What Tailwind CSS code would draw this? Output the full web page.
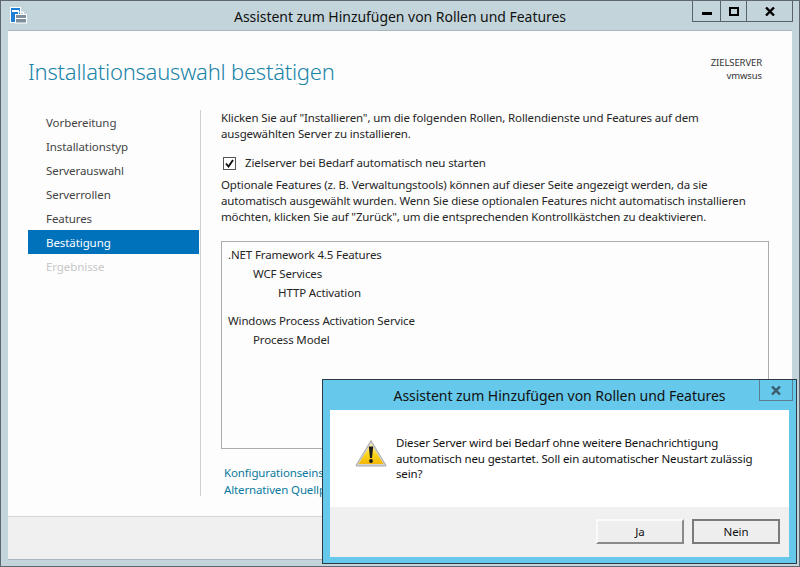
<!DOCTYPE html>
<html lang="de"><head><meta charset="utf-8"><script src="https://cdn.jsdelivr.net/npm/@tailwindcss/browser@4"></script></head>
<body class="m-0 overflow-hidden">
<div class="relative w-[800px] h-[567px] overflow-hidden bg-[#c3d5da] border border-[#5f6770] font-['Noto_Sans',sans-serif] text-[11.5px] tracking-[-0.135px] text-[#262626] flex flex-col">
  <!-- title bar -->
  <div class="relative h-[29px] shrink-0 flex items-center">
    <svg class="absolute left-[9px] top-[6px]" width="18" height="17" viewBox="0 0 18 17"><rect x="0.5" y="0.5" width="10" height="15" fill="#1e7fd6" stroke="#fff"/><rect x="2" y="3" width="7" height="2" fill="#fff"/><rect x="5.5" y="7.5" width="11" height="8.5" fill="#7f8f9c" stroke="#fff"/><path d="M8.5 7V5h5v2" fill="none" stroke="#fff"/><rect x="6" y="11" width="10" height="1" fill="#fff"/></svg>
    <div class="w-full text-center text-[14px] tracking-[-0.04px] leading-[29px] text-[#111] pt-[1px]">Assistent zum Hinzufügen von Rollen und Features</div>
    <div class="absolute right-[6px] top-0 h-[21px] w-[101px] flex border border-t-0 border-[#59636b]">
      <div class="w-[28px] border-r border-[#59636b] flex items-center justify-center"><div class="w-[10px] h-[3px] bg-black mt-[4px]"></div></div>
      <div class="w-[26px] border-r border-[#59636b] flex items-center justify-center"><div class="w-[10px] h-[9px] border-2 border-black"></div></div>
      <div class="flex-1 flex items-center justify-center"><svg width="10" height="9" viewBox="0 0 10 9"><path d="M1 0.5 9 8.5M9 0.5 1 8.5" stroke="#000" stroke-width="2.4"/></svg></div>
    </div>
  </div>
  <!-- client -->
  <div class="mx-[7px] flex-1 bg-[#fdfdfd] border-t border-[#a9b6bc] border-b flex flex-col min-h-0 mb-[6px]">
    <div class="h-[79px] shrink-0 flex justify-between pl-[20px] pr-[30px]">
      <h1 class="text-[22px] tracking-[-0.23px] font-light leading-[32px] mt-[24px] text-[#1a84a8]">Installationsauswahl bestätigen</h1>
      <div class="text-right text-[9.5px] tracking-[-0.1px] leading-[13px] mt-[25px] text-[#333]"><div>ZIELSERVER</div><div>vmwsus</div></div>
    </div>
    <div class="flex-1 flex min-h-0 pl-[20px] pr-[23px]">
      <nav class="w-[171px] shrink-0 text-[#444] tracking-[-0.08px]">
        <div class="h-[24px] leading-[26px] pl-[18px]">Vorbereitung</div>
        <div class="h-[24px] leading-[26px] pl-[18px]">Installationstyp</div>
        <div class="h-[24px] leading-[26px] pl-[18px]">Serverauswahl</div>
        <div class="h-[24px] leading-[26px] pl-[18px]">Serverrollen</div>
        <div class="h-[24px] leading-[26px] pl-[18px]">Features</div>
        <div class="h-[24px] leading-[26px] pl-[18px] bg-[#0072bc] text-white">Bestätigung</div>
        <div class="h-[24px] leading-[26px] pl-[18px] text-[#c8c8c8]">Ergebnisse</div>
      </nav>
      <section class="flex-1 ml-[1px] mb-[20px] border-l border-[#d0d0d0] pl-[20px]">
        <p class="leading-[16px] mt-0 whitespace-nowrap">Klicken Sie auf "Installieren", um die folgenden Rollen, Rollendienste und Features auf dem<br>ausgewählten Server zu installieren.</p>
        <label class="flex items-center mt-[13px] h-[16px]">
          <span class="w-[13px] h-[13px] ml-[2px] border border-[#555] bg-white flex items-center justify-center"><svg width="9" height="9" viewBox="0 0 9 9"><path d="M1 4.5 3.5 7.5 8 1" fill="none" stroke="#111" stroke-width="1.9"/></svg></span>
          <span class="ml-[9px]">Zielserver bei Bedarf automatisch neu starten</span>
        </label>
        <p class="leading-[16px] mt-[6px] whitespace-nowrap">Optionale Features (z. B. Verwaltungstools) können auf dieser Seite angezeigt werden, da sie<br>automatisch ausgewählt wurden. Wenn Sie diese optionalen Features nicht automatisch installieren<br>möchten, klicken Sie auf "Zurück", um die entsprechenden Kontrollkästchen zu deaktivieren.</p>
        <div class="mt-[16px] h-[208px] border border-[#ababab] pl-[6px] pt-[3px]">
          <div class="leading-[19px]">.NET Framework 4.5 Features</div>
          <div class="leading-[19px] pl-[25px]">WCF Services</div>
          <div class="leading-[19px] pl-[50px]">HTTP Activation</div>
          <div class="leading-[19px] mt-[9px]">Windows Process Activation Service</div>
          <div class="leading-[19px] pl-[25px]">Process Model</div>
        </div>
        <div class="mt-[15px] pl-[3px] leading-[17px] text-[#0c7a9e]">
          <div>Konfigurationseinstellungen exportieren</div>
          <div>Alternativen Quellpfad angeben</div>
        </div>
      </section>
    </div>
    <div class="h-[43px] shrink-0 bg-[#f0f0f0] border-t border-[#d6d6d6]"></div>
  </div>
  <!-- dialog -->
  <div class="absolute left-[321px] top-[378px] w-[475px] h-[185px] bg-[#66c8ea] border border-[#2c3a44] px-[7px] pb-[6px] flex flex-col">
    <div class="relative h-[30px] shrink-0 text-center text-[14px] tracking-[-0.04px] leading-[31px] text-[#111]">Assistent zum Hinzufügen von Rollen und Features
      <div class="absolute right-[-4px] top-0 w-[34px] h-[21px] border border-t-0 border-[#5a7d90] flex items-center justify-center"><svg width="10" height="9" viewBox="0 0 10 9"><path d="M1 0.5 9 8.5M9 0.5 1 8.5" stroke="#3b5a6b" stroke-width="2.4"/></svg></div>
    </div>
    <div class="flex-1 bg-white flex flex-col min-h-0">
      <div class="h-[97px] shrink-0 flex pl-[25px] pt-[25px]">
        <svg class="shrink-0 mt-[4px]" width="32" height="28" viewBox="0 0 32 28"><defs><linearGradient id="warn" x1="0" y1="0" x2="0" y2="1"><stop offset="0" stop-color="#fff3a8"/><stop offset=".55" stop-color="#fbd41a"/><stop offset="1" stop-color="#f2b705"/></linearGradient></defs><path d="M16 1.5 31 26.5Q31 27 30 27H2Q1 27 1 26.5Z" fill="#d2d2d2" stroke="#a8a8a8"/><path d="M16 4.5 28.5 25H3.5Z" fill="url(#warn)"/><path d="M13.8 7.5h4.4l-1.2 11.5h-2z" fill="#1a1a1a"/><circle cx="16" cy="22" r="1.9" fill="#1a1a1a"/></svg>
        <p class="ml-[9px] leading-[15.5px] text-[#111] whitespace-nowrap">Dieser Server wird bei Bedarf ohne weitere Benachrichtigung<br>automatisch neu gestartet. Soll ein automatischer Neustart zulässig<br>sein?</p>
      </div>
      <div class="flex-1 bg-[#f0f0f0] flex justify-end gap-[8px] pt-[12px] pr-[9px]">
        <button class="w-[88px] h-[25px] bg-[#eeeeee] border-2 border-t-[#fafafa] border-l-[#fafafa] border-r-[#8a8a8a] border-b-[#8a8a8a] text-[#111] leading-[20px]">Ja</button>
        <button class="w-[88px] h-[25px] bg-[#eeeeee] border-2 border-[#7b7b7b] text-[#111] leading-[20px]">Nein</button>
      </div>
    </div>
  </div>
</div>
</body></html>
